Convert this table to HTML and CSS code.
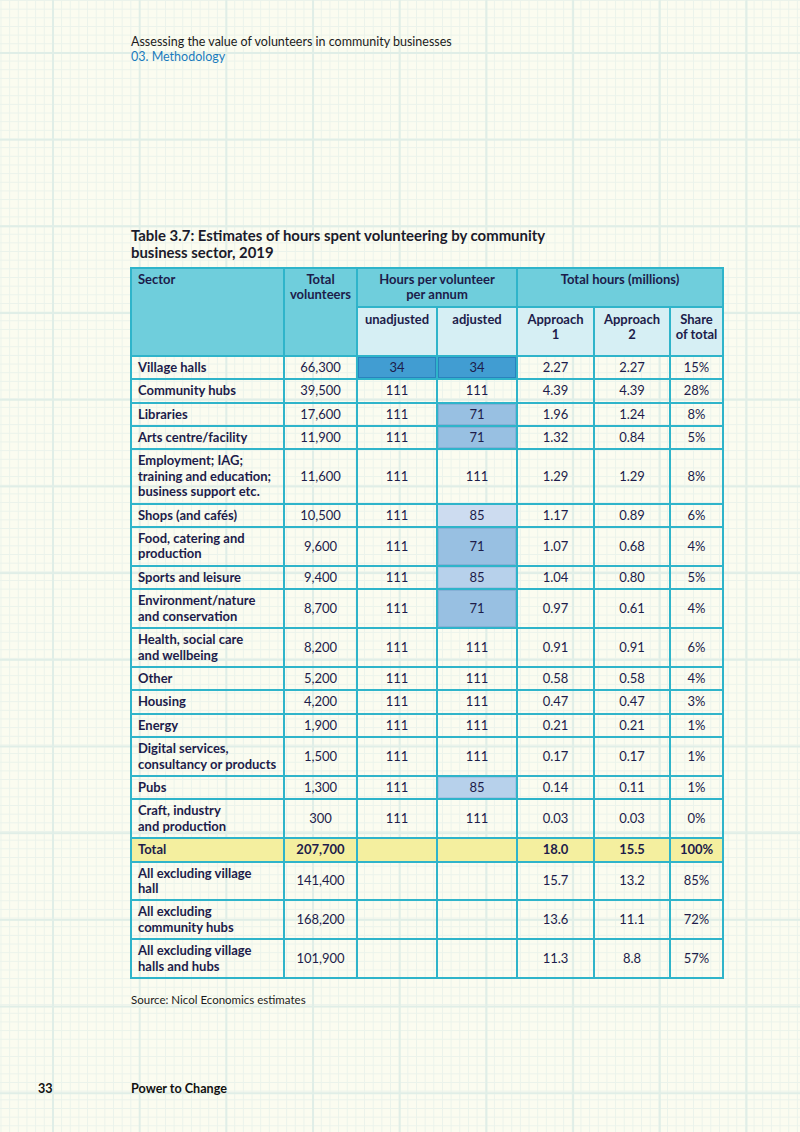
FILE: index.html
```html
<!DOCTYPE html>
<html lang="en">
<head>
<meta charset="utf-8">
<title>Table 3.7</title>
<link rel="stylesheet" href="styles.css">
</head>
<body>
<div class="page">
  <header class="running">
    <p class="doc">Assessing the value of volunteers in community businesses</p>
    <p class="section">03. Methodology</p>
  </header>

  <main class="content">
    <h2 class="caption">Table 3.7: Estimates of hours spent volunteering by community<br>business sector, 2019</h2>

    <table class="data">
      <colgroup>
        <col class="w-sector"><col class="w-total"><col class="w-unadj"><col class="w-adj"><col class="w-a1"><col class="w-a2"><col class="w-share">
      </colgroup>
      <thead>
        <tr class="h1">
          <th rowspan="2" class="left">Sector</th>
          <th rowspan="2">Total<br>volunteers</th>
          <th colspan="2">Hours per volunteer<br>per annum</th>
          <th colspan="3">Total hours (millions)</th>
        </tr>
        <tr class="h2">
          <th class="sub">unadjusted</th>
          <th class="sub">adjusted</th>
          <th class="sub">Approach<br>1</th>
          <th class="sub">Approach<br>2</th>
          <th class="sub">Share<br>of total</th>
        </tr>
      </thead>
      <tbody>
        <tr><td class="label">Village halls</td><td>66,300</td><td class="c34">34</td><td class="c34">34</td><td>2.27</td><td>2.27</td><td>15%</td></tr>
        <tr><td class="label">Community hubs</td><td>39,500</td><td>111</td><td>111</td><td>4.39</td><td>4.39</td><td>28%</td></tr>
        <tr><td class="label">Libraries</td><td>17,600</td><td>111</td><td class="c71">71</td><td>1.96</td><td>1.24</td><td>8%</td></tr>
        <tr><td class="label">Arts centre/facility</td><td>11,900</td><td>111</td><td class="c71">71</td><td>1.32</td><td>0.84</td><td>5%</td></tr>
        <tr><td class="label">Employment; IAG;<br>training and education;<br>business support etc.</td><td>11,600</td><td>111</td><td>111</td><td>1.29</td><td>1.29</td><td>8%</td></tr>
        <tr><td class="label">Shops (and cafés)</td><td>10,500</td><td>111</td><td class="c85 light">85</td><td>1.17</td><td>0.89</td><td>6%</td></tr>
        <tr><td class="label">Food, catering and<br>production</td><td>9,600</td><td>111</td><td class="c71">71</td><td>1.07</td><td>0.68</td><td>4%</td></tr>
        <tr><td class="label">Sports and leisure</td><td>9,400</td><td>111</td><td class="c85">85</td><td>1.04</td><td>0.80</td><td>5%</td></tr>
        <tr><td class="label">Environment/nature<br>and conservation</td><td>8,700</td><td>111</td><td class="c71">71</td><td>0.97</td><td>0.61</td><td>4%</td></tr>
        <tr><td class="label">Health, social care<br>and wellbeing</td><td>8,200</td><td>111</td><td>111</td><td>0.91</td><td>0.91</td><td>6%</td></tr>
        <tr><td class="label">Other</td><td>5,200</td><td>111</td><td>111</td><td>0.58</td><td>0.58</td><td>4%</td></tr>
        <tr><td class="label">Housing</td><td>4,200</td><td>111</td><td>111</td><td>0.47</td><td>0.47</td><td>3%</td></tr>
        <tr><td class="label">Energy</td><td>1,900</td><td>111</td><td>111</td><td>0.21</td><td>0.21</td><td>1%</td></tr>
        <tr><td class="label">Digital services,<br>consultancy or products</td><td>1,500</td><td>111</td><td>111</td><td>0.17</td><td>0.17</td><td>1%</td></tr>
        <tr><td class="label">Pubs</td><td>1,300</td><td>111</td><td class="c85">85</td><td>0.14</td><td>0.11</td><td>1%</td></tr>
        <tr><td class="label">Craft, industry<br>and production</td><td>300</td><td>111</td><td>111</td><td>0.03</td><td>0.03</td><td>0%</td></tr>
        <tr class="total"><td class="label">Total</td><td>207,700</td><td></td><td></td><td>18.0</td><td>15.5</td><td>100%</td></tr>
        <tr><td class="label">All excluding village<br>hall</td><td>141,400</td><td></td><td></td><td>15.7</td><td>13.2</td><td>85%</td></tr>
        <tr><td class="label">All excluding<br>community hubs</td><td>168,200</td><td></td><td></td><td>13.6</td><td>11.1</td><td>72%</td></tr>
        <tr><td class="label">All excluding village<br>halls and hubs</td><td>101,900</td><td></td><td></td><td>11.3</td><td>8.8</td><td>57%</td></tr>
      </tbody>
    </table>

    <p class="source">Source: Nicol Economics estimates</p>
  </main>

  <footer class="foot">
    <span class="pg">33</span>
    <span class="brand">Power to Change</span>
  </footer>
</div>
</body>
</html>
```

FILE: styles.css
```css
html, body {
  margin: 0;
  padding: 0;
}

body {
  font-family: Lato, "Liberation Sans", sans-serif;
  color: #1a1a1a;
  background-color: #fbfcf0;
  background-image:
    linear-gradient(90deg, #e0eee7 2px, transparent 2px),
    linear-gradient(180deg, #e0eee7 2px, transparent 2px),
    linear-gradient(90deg, #ebf3eb 1px, transparent 1px),
    linear-gradient(180deg, #ebf3eb 1px, transparent 1px);
  background-size: 86.7px 86.7px, 86.7px 86.7px, 8.67px 8.67px, 8.67px 8.67px;
  background-position: 52px 52px, 52px 52px, 0.5px 0px, 0.5px 0px;
}

.page {
  width: 800px;
  height: 1132px;
  display: flex;
  flex-direction: column;
  box-sizing: border-box;
}

.running {
  padding: 35px 0 0 131px;
  font-size: 12.5px;
  line-height: 14.5px;
}

.running p {
  margin: 0;
}

.running .doc {
  color: #1b1b1b;
}

.running .section {
  color: #1a7bbd;
}

.content {
  padding-left: 131px;
}

.caption {
  margin: 163px 0 0 0;
  font-size: 14.9px;
  line-height: 17px;
  font-weight: 700;
  color: #1b1b2b;
}

.data {
  margin-top: 6px;
  width: 592px;
  table-layout: fixed;
  border-collapse: collapse;
  font-size: 13px;
  line-height: 15.4px;
  color: #1d1c4a;
  margin-left: -1px;
}

.w-sector { width: 153px; }
.w-total { width: 73px; }
.w-unadj { width: 80px; }
.w-adj { width: 80px; }
.w-a1 { width: 77px; }
.w-a2 { width: 76px; }
.w-share { width: 53px; }

.data th,
.data td {
  border: 2px solid #2fb4ca;
  padding: 3px 4px 3px;
  text-align: center;
}

.data th {
  background: #6fcedc;
  font-weight: 700;
  vertical-align: top;
  color: #1d1c4a;
}

.data th.left {
  text-align: left;
  padding-left: 6px;
}

.data tr.h1 {
  height: 38px;
}

.data tr.h1 th {
  padding-top: 3px;
}

.data tr.h2 {
  height: 49px;
}

.data th.sub {
  background: #d6eff4;
  padding-top: 4px;
}

.data td {
  vertical-align: middle;
  font-weight: 400;
}

.data td.label {
  text-align: left;
  font-weight: 700;
  padding-left: 6px;
  padding-right: 0;
  white-space: nowrap;
}

.data td.c34 {
  background: #419dd2;
  box-shadow: inset 0 0 0 1px #2a82bd;
}

.data td.c71 {
  background: #98c0e2;
  box-shadow: inset 0 0 0 1px #86b0d6;
}

.data td.c85 {
  background: #b7d1eb;
  box-shadow: inset 0 0 0 1px #a5c3e2;
}

.data td.c85.light {
  background: #cddcf0;
  box-shadow: none;
}

.data tr.total td {
  background: #f4ef9f;
  font-weight: 700;
}

.source {
  margin: 14px 0 0 0;
  font-size: 11.5px;
  line-height: 14px;
  color: #1b1b1b;
}

.foot {
  margin-top: auto;
  margin-bottom: 36px;
  padding-left: 38px;
  display: flex;
  font-size: 12.6px;
  line-height: 14px;
  font-weight: 700;
  color: #111;
}

.foot .pg {
  width: 93px;
}
```
